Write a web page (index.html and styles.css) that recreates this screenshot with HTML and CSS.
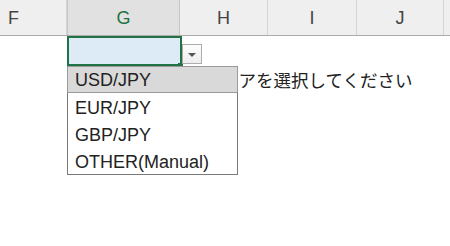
FILE: index.html
```html
<!DOCTYPE html>
<html lang="ja">

<head>
    <meta charset="UTF-8">
    <title>通貨ペア選択</title>
    <link rel="stylesheet" href="styles.css">
</head>

<body>
    <div class="sheet">
        <!-- 列見出し -->
        <div class="col-heads">
            <div class="head col-f">F</div>
            <div class="head col-g selected">G</div>
            <div class="head col-h">H</div>
            <div class="head col-i">I</div>
            <div class="head col-j">J</div>
            <div class="head col-k"></div>
        </div>

        <div class="row">
            <div class="cell col-f"></div>
            <div class="cell col-g active">
                <span class="handle"></span>
                <button class="dd-btn"><span class="arrow"></span></button>
                <ul class="dd-list">
                    <li class="hover">USD/JPY</li>
                    <li>EUR/JPY</li>
                    <li>GBP/JPY</li>
                    <li>OTHER(Manual)</li>
                </ul>
            </div>
        </div>

        <div class="row">
            <div class="cell col-f"></div>
            <div class="cell col-g"></div>
            <div class="cell col-h"><span class="note">通貨ペアを選択してください</span></div>
        </div>
    </div>
</body>

</html>
```

FILE: styles.css
```css
body {
    margin: 0;
    background: #fff;
    font-family: "Liberation Sans", "Noto Sans CJK JP", sans-serif;
    overflow: hidden;
}

.sheet {
    width: 450px;
    height: 246px;
}

.col-heads {
    display: flex;
    height: 35px;
    background: #efefef;
    border-bottom: 1px solid #ababab;
}

.head {
    flex: none;
    box-sizing: border-box;
    border-right: 1px solid #d5d5d5;
    font-size: 18px;
    color: #444;
    line-height: 36px;
    text-align: center;
}

.head.col-f {
    text-align: left;
    padding-left: 8px;
}

.head.selected {
    background: #e1e1e1;
    border-left: 1px solid #c6c6c6;
    border-right: 1px solid #c6c6c6;
    color: #217346;
}

.col-f { width: 67px; }
.col-g { width: 113px; }
.col-h { width: 88px; }
.col-i { width: 89px; }
.col-j { width: 87px; }
.col-k { width: 6px; border-right: none; }

.row {
    display: flex;
    height: 30px;
}

.cell {
    flex: none;
    position: relative;
    box-sizing: border-box;
}

.active {
    background: #ddebf7;
}

.active::after {
    content: "";
    position: absolute;
    left: 0;
    top: 0;
    right: -2px;
    bottom: 0;
    border: 2px solid #217346;
}

.handle {
    position: absolute;
    right: -3px;
    bottom: -2px;
    width: 5px;
    height: 5px;
    background: #217346;
    z-index: 2;
}

.dd-btn {
    position: absolute;
    left: 115px;
    top: 8px;
    width: 20px;
    height: 20px;
    padding: 0;
    border: 1px solid #acacac;
    background: linear-gradient(#fdfdfd, #eeeeee);
    z-index: 3;
}

.arrow {
    display: block;
    width: 0;
    height: 0;
    margin: 1px auto 0;
    border-left: 4px solid transparent;
    border-right: 4px solid transparent;
    border-top: 4px solid #555;
}

.dd-list {
    position: absolute;
    left: 0;
    top: 30px;
    width: 171px;
    margin: 0;
    padding: 0;
    list-style: none;
    background: #fff;
    border: 1px solid #7a7a7a;
    box-sizing: border-box;
    z-index: 4;
}

.dd-list li {
    height: 27px;
    padding: 3px 0 0 7px;
    line-height: 24px;
    font-size: 18px;
    color: #222;
    box-sizing: border-box;
}

.dd-list li.hover {
    background: #d9d9d9;
    border: 1px solid #9a9a9a;
    margin: -1px -1px 0;
    padding-top: 2px;
    line-height: 23px;
}

.note {
    position: absolute;
    left: 6px;
    top: 2px;
    white-space: nowrap;
    font-family: "Noto Sans CJK JP", sans-serif;
    font-size: 17.5px;
    line-height: 24px;
    color: #222;
}
```
